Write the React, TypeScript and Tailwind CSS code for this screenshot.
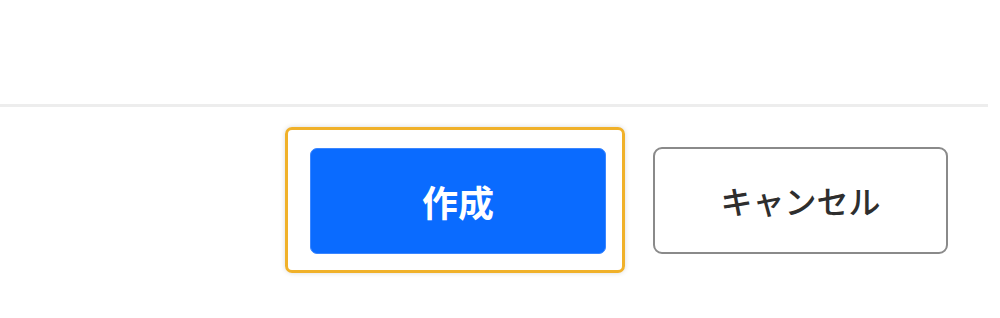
import React from "react";

export default function App() {
  return (
    <div
      className="w-[1000px] h-[318px] bg-white overflow-hidden"
      style={{ fontFamily: '"Noto Sans CJK JP", "Noto Sans", sans-serif' }}
    >
      <div className="h-[104px]" />
      <div className="w-[988px] h-[3px] bg-[#ededed]" />
      <div className="flex justify-end items-center pr-[52px] pt-[20px] gap-[28px]">
        <div className="border-[3px] border-[#f0b12a] rounded-[7px] pl-[22px] pr-[16px] pt-[18px] pb-[16px] shadow-[0_0_5px_rgba(0,0,0,0.15)]">
          <button className="w-[296px] h-[106px] rounded-[7px] bg-[#0a6bff] border border-[#3a86ff] text-white font-bold text-[36px] flex items-center justify-center leading-none">
            作成
          </button>
        </div>
        <button className="w-[295px] h-[107px] rounded-[9px] bg-white border-2 border-[#8a8a8a] text-[#2e2e2e] font-medium text-[32px] flex items-center justify-center leading-none">
          キャンセル
        </button>
      </div>
    </div>
  );
}
